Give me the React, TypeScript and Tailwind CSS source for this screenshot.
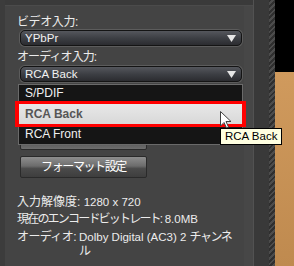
import React from 'react';

const font = "font-['Liberation_Sans','Noto_Sans_CJK_JP',sans-serif]";

const Triangle: React.FC = () => (
  <svg width="9" height="7" viewBox="0 0 9 7">
    <polygon points="0,0 9,0 4.5,7" fill="#e6e6e6" />
  </svg>
);

const Dropdown: React.FC<{ value: string }> = ({ value }) => (
  <div className="ml-[15px] w-[222px] h-[16px] flex items-center justify-between pl-[4px] pr-[5px] rounded-[5px] border border-[#141414] shadow-[0_0_0_1px_#5c5c5c] bg-[linear-gradient(180deg,#55575d_0%,#3d3f44_50%,#2b2c30_100%)]">
    <span className="text-[11.5px] leading-[14px] text-[#f2f2f2]">{value}</span>
    <Triangle />
  </div>
);

const Cursor: React.FC = () => (
  <svg width="12" height="18" viewBox="0 0 12 18" className="absolute left-[220px] top-[111px]">
    <path d="M0.5 0.5 L0.5 15 L4 11.5 L6.5 17 L8.5 16 L6 10.5 L11 10.5 Z" fill="#ffffff" stroke="#404040" strokeWidth="1" />
  </svg>
);

export default function App() {
  return (
    <div className={`relative w-[294px] h-[266px] overflow-hidden flex bg-[#3a3a3a] ${font}`}>
      <div className="w-[5px] bg-[#3c3c3c]" />
      <div className="w-[248px] flex flex-col">
        <div className="h-[5px] bg-[#3a3a3a]" />
        <div className="flex-1 flex border-t border-[#4b4b4b] bg-[#444444]">
          <div className="relative w-[239px] flex flex-col text-[#ececec]">
            <div className="pl-[12px] pt-[10px] text-[12px] leading-[13px] tracking-[-0.4px]">ビデオ入力:</div>
            <div className="mt-[1px]">
              <Dropdown value="YPbPr" />
            </div>
            <div className="pl-[12px] mt-[5px] text-[12px] leading-[13px] tracking-[-0.9px]">オーディオ入力:</div>
            <div className="mt-[2px]">
              <Dropdown value="RCA Back" />
            </div>

            <div className="ml-[15px] mt-[46px] w-[127px] h-[22px] rounded-[2px] border border-[#2a2a2a] bg-[linear-gradient(180deg,#8c8c8c_0%,#6a6a6a_45%,#515151_60%,#6e6e6e_100%)]" />
            <div className="ml-[15px] mt-[6px] w-[127px] h-[22px] flex items-center justify-center rounded-[2px] border border-[#2a2a2a] bg-[linear-gradient(180deg,#8e8e8e_0%,#6c6c6c_45%,#4a4a4a_58%,#3e3e3e_100%)]">
              <span className="text-[12px] leading-[13px] tracking-[-1.4px] text-white">フォーマット設定</span>
            </div>

            <div className="pl-[12px] mt-[16px] text-[12px] leading-[17px] whitespace-nowrap">
              入力解像度: <span className="text-[11.5px]">1280 x 720</span>
            </div>
            <div className="pl-[12px] text-[12px] leading-[17px] whitespace-nowrap">
              <span className="tracking-[-1.8px]">現在のエンコードビットレート:</span>{' '}
              <span className="text-[11.5px]">8.0MB</span>
            </div>
            <div className="pl-[12px] mt-[2px] flex text-[12px] leading-[14px]">
              <span className="w-[62px] shrink-0 whitespace-nowrap tracking-[-0.6px]">オーディオ:</span>
              <span className="whitespace-nowrap">
                <span className="text-[11.5px]">Dolby Digital (AC3) 2 </span>
                <span className="tracking-[-1.5px]">チャンネ</span>
                <br />ル
              </span>
            </div>

            <div className="absolute left-[13px] top-[78px] w-[225px] h-[61px] flex flex-col border border-[#6a6a6a] bg-[#151515] text-[12px] text-[#f0f0f0]">
              <div className="h-[16px] pl-[6px] leading-[16px]">S/PDIF</div>
              <div className="-mx-[4px] h-[26px] flex items-center pl-[6px] border-x-4 border-y-[3px] border-[#ff0000] bg-[linear-gradient(180deg,#e8e8e8,#d8d8d8)]">
                <span className="font-bold text-[#565656]">RCA Back</span>
              </div>
              <div className="h-[14px] pl-[6px] leading-[14px]">RCA Front</div>
            </div>
          </div>
          <div className="w-[9px] bg-[#474747]" />
        </div>
      </div>
      <div className="w-[1px] bg-[#525252]" />
      <div className="w-[15px] bg-[#393939]" />
      <div className="w-[6px] bg-[repeating-linear-gradient(135deg,#2f2f2f_0px,#2f2f2f_2px,#4c4c4c_2px,#4c4c4c_4px)]" />
      <div className="w-[19px] flex flex-col">
        <div className="h-[72px] bg-black" />
        <div className="flex-1 bg-[linear-gradient(180deg,#d09a5d,#bf8a4f)]" />
      </div>

      <Cursor />
      <div className="absolute left-[220px] top-[128px] h-[17px] px-[4px] flex items-center border border-black bg-[#ffffe1] text-[11.5px] text-black whitespace-nowrap">
        RCA Back
      </div>
    </div>
  );
}
